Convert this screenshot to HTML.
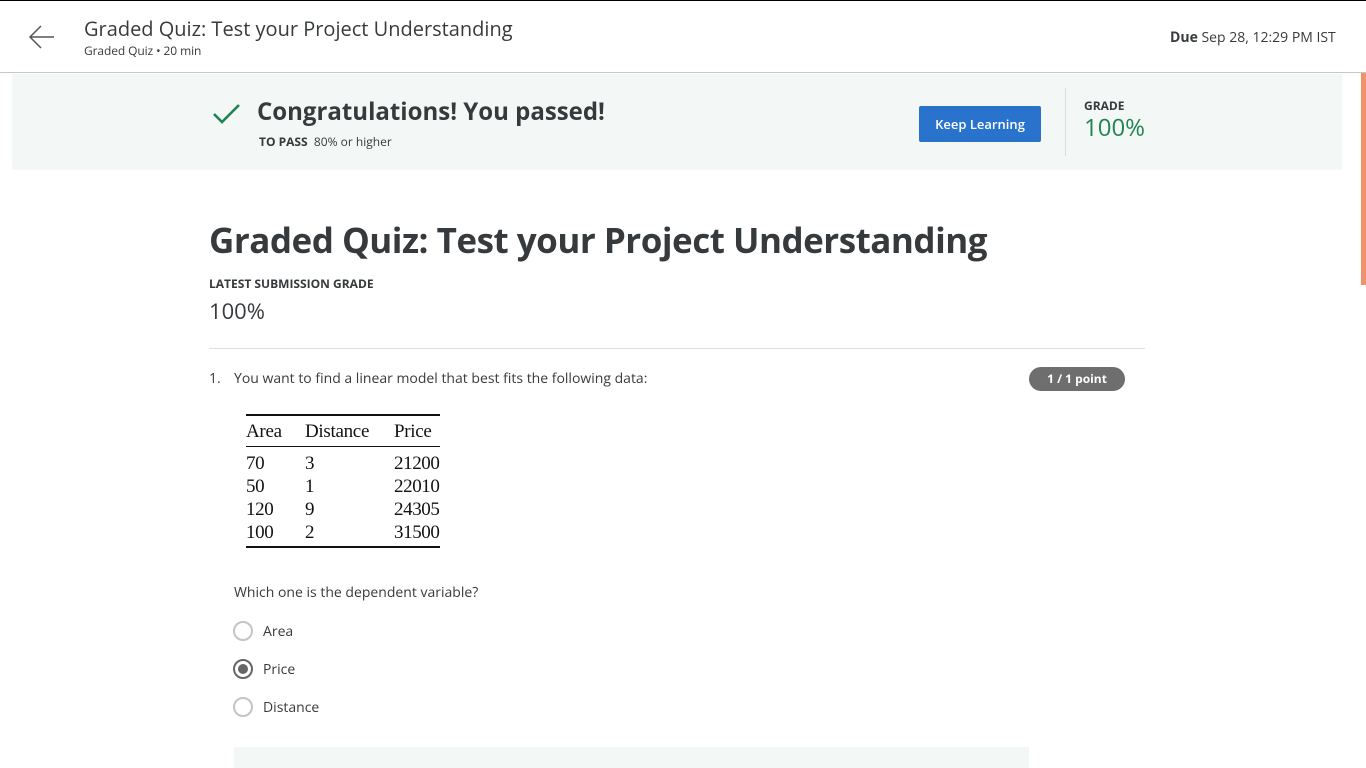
<!DOCTYPE html>
<html><head><meta charset="utf-8"><style>
*{margin:0;padding:0;box-sizing:border-box}
body{width:1366px;height:768px;overflow:hidden;background:#fff;font-family:"Open Sans","DejaVu Sans","Liberation Sans",sans-serif;color:#373a3c;position:relative}
.a{position:absolute;white-space:nowrap}
.serif{font-family:"Liberation Serif",serif;color:#111;font-size:19px}
</style></head><body>
<div class="a" style="left:0;top:0;width:1366px;height:1px;background:#000"></div>
<svg class="a" style="left:28px;top:24px" width="28" height="26" viewBox="0 0 28 26"><path d="M26 13H3M13 2L2 13l11 11" fill="none" stroke="#555" stroke-width="1.5"/></svg>
<div class="a" style="left:84px;top:15px;font-size:20px;color:#373a3c">Graded Quiz: Test your Project Understanding</div>
<div class="a" style="left:84px;top:42px;font-size:12px;color:#373a3c;letter-spacing:-0.1px">Graded Quiz • 20 min</div>
<div class="a" style="left:1170px;top:28px;font-size:14px"><b>Due</b> Sep 28, 12:29 PM IST</div>
<div class="a" style="left:0;top:72px;width:1366px;height:1px;background:#c8c8c8"></div>
<div class="a" style="left:1361px;top:73px;width:5px;height:212px;background:#f0936a"></div>
<div class="a" style="left:12px;top:74px;width:1330px;height:96px;background:#f3f8f6"></div>
<svg class="a" style="left:212px;top:102px" width="30" height="24" viewBox="0 0 30 24"><path d="M2 12l8 8L27 3" fill="none" stroke="#1f8354" stroke-width="2.6"/></svg>
<div class="a" style="left:257px;top:95px;font-size:24px;font-weight:bold;color:#373a3c">Congratulations! You passed!</div>
<div class="a" style="left:259px;top:133px;font-size:12px"><b>TO PASS</b>&nbsp; 80% or higher</div>
<div class="a" style="left:919px;top:106px;width:122px;height:36px;background:#2a73cc;border-radius:2px;color:#fff;font-size:13px;font-weight:600;text-align:center;line-height:36px">Keep Learning</div>
<div class="a" style="left:1065px;top:88px;width:1px;height:68px;background:#ddd"></div>
<div class="a" style="left:1084px;top:97px;font-size:12px;font-weight:bold">GRADE</div>
<div class="a" style="left:1084px;top:111px;font-size:24px;color:#1f8354">100%</div>
<div class="a" style="left:209px;top:217px;font-size:35px;font-weight:bold;color:#373a3c;letter-spacing:-0.5px">Graded Quiz: Test your Project Understanding</div>
<div class="a" style="left:209px;top:275px;font-size:12px;font-weight:bold">LATEST SUBMISSION GRADE</div>
<div class="a" style="left:209px;top:296px;font-size:22px">100%</div>
<div class="a" style="left:209px;top:348px;width:936px;height:1px;background:#ddd"></div>
<div class="a" style="left:209px;top:369px;font-size:14px">1.</div>
<div class="a" style="left:234px;top:369px;font-size:14px">You want to find a linear model that best fits the following data:</div>
<div class="a" style="left:1029px;top:367px;width:96px;height:24px;background:#6e6e6e;border-radius:12px;color:#fff;font-size:12px;font-weight:bold;text-align:center;line-height:24px">1 / 1 point</div>
<div class="a" style="left:246px;top:414px;width:194px;height:2px;background:#111"></div>
<div class="a" style="left:246px;top:446px;width:194px;height:1px;background:#111"></div>
<div class="a" style="left:246px;top:546px;width:194px;height:2px;background:#111"></div>
<div class="a serif" style="left:246px;top:421px;letter-spacing:-0.3px">Area</div>
<div class="a serif" style="left:305px;top:421px;letter-spacing:-0.3px">Distance</div>
<div class="a serif" style="left:394px;top:421px;letter-spacing:-0.3px">Price</div>
<div class="a serif" style="left:246px;top:452px;line-height:23px;letter-spacing:-0.4px">70<br>50<br>120<br>100</div>
<div class="a serif" style="left:305px;top:452px;line-height:23px">3<br>1<br>9<br>2</div>
<div class="a serif" style="left:394px;top:452px;line-height:23px;letter-spacing:-0.4px">21200<br>22010<br>24305<br>31500</div>
<div class="a" style="left:234px;top:583px;font-size:14px">Which one is the dependent variable?</div>
<div class="a" style="left:233px;top:621px;width:20px;height:20px;border:2px solid #c4c4c4;border-radius:50%"></div>
<div class="a" style="left:263px;top:622px;font-size:14px">Area</div>
<div class="a" style="left:233px;top:659px;width:20px;height:20px;border:2px solid #666;border-radius:50%"><div style="margin:3px;width:10px;height:10px;border-radius:50%;background:#666"></div></div>
<div class="a" style="left:263px;top:660px;font-size:14px">Price</div>
<div class="a" style="left:233px;top:697px;width:20px;height:20px;border:2px solid #c4c4c4;border-radius:50%"></div>
<div class="a" style="left:263px;top:698px;font-size:14px">Distance</div>
<div class="a" style="left:234px;top:747px;width:795px;height:21px;background:#f3f8f6"></div>
</body></html>
